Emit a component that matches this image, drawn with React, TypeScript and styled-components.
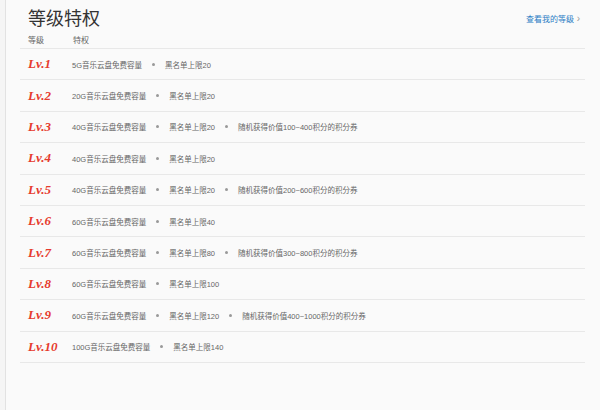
import React from "react";
import styled, { createGlobalStyle } from "styled-components";

const Global = createGlobalStyle`
  html, body { margin: 0; background: #f5f5f5; }
  body { font-family: "Liberation Sans", "Noto Sans CJK SC", sans-serif; }
`;

const Page = styled.div`
  margin-left: 5px;
  border-left: 1px solid #e2e2e2;
  background: #fafafa;
  height: 410px;
  padding: 0 15px 0 14px;
  box-sizing: border-box;
`;

const Head = styled.div`
  display: flex;
  justify-content: space-between;
  align-items: flex-end;
  padding: 6px 5px 0 8px;
  height: 30px;
  box-sizing: border-box;
`;

const Title = styled.h1`
  margin: 0;
  font-size: 18px;
  font-weight: normal;
  color: #333;
  font-family: "Noto Sans CJK SC", sans-serif;
`;

const Link = styled.a`
  font-size: 8px;
  color: #2b7dc5;
  margin-bottom: 6px;
  &::after { content: " ›"; color: #999; font-size: 10px; }
`;

const Cols = styled.div`
  display: flex;
  height: 18px;
  align-items: center;
  font-size: 8px;
  color: #666;
  padding-left: 8px;
  border-bottom: 1px solid #e8e8e8;
`;

const Col = styled.span<{ w?: number }>`
  width: ${p => (p.w ? p.w + "px" : "auto")};
`;

const Row = styled.div`
  display: flex;
  align-items: center;
  height: 31.4px;
  box-sizing: border-box;
  border-bottom: 1px solid #e8e8e8;
  padding-left: 8px;
`;

const Lv = styled.span`
  width: 44px;
  color: #e63b2e;
  font-family: "Liberation Serif", serif;
  font-style: italic;
  font-weight: bold;
  font-size: 13px;
`;

const Feats = styled.div`
  display: flex;
  align-items: center;
  font-size: 7.5px;
  color: #666;
`;

const Dot = styled.span`
  width: 3px;
  height: 3px;
  border-radius: 50%;
  background: #999;
  margin: 0 10px;
`;

const data: [string, string[]][] = [
  ["1", ["5G音乐云盘免费容量", "黑名单上限20"]],
  ["2", ["20G音乐云盘免费容量", "黑名单上限20"]],
  ["3", ["40G音乐云盘免费容量", "黑名单上限20", "随机获得价值100~400积分的积分券"]],
  ["4", ["40G音乐云盘免费容量", "黑名单上限20"]],
  ["5", ["40G音乐云盘免费容量", "黑名单上限20", "随机获得价值200~600积分的积分券"]],
  ["6", ["60G音乐云盘免费容量", "黑名单上限40"]],
  ["7", ["60G音乐云盘免费容量", "黑名单上限80", "随机获得价值300~800积分的积分券"]],
  ["8", ["60G音乐云盘免费容量", "黑名单上限100"]],
  ["9", ["60G音乐云盘免费容量", "黑名单上限120", "随机获得价值400~1000积分的积分券"]],
  ["10", ["100G音乐云盘免费容量", "黑名单上限140"]],
];

export default function App() {
  return (
    <>
      <Global />
      <Page>
        <Head>
          <Title>等级特权</Title>
          <Link>查看我的等级</Link>
        </Head>
        <Cols>
          <Col w={45}>等级</Col>
          <Col>特权</Col>
        </Cols>
        {data.map(([lv, f]) => (
          <Row key={lv}>
            <Lv>Lv.{lv}</Lv>
            <Feats>
              {f.map((t, i) => (
                <React.Fragment key={i}>
                  {i > 0 && <Dot />}
                  <span>{t}</span>
                </React.Fragment>
              ))}
            </Feats>
          </Row>
        ))}
      </Page>
    </>
  );
}
